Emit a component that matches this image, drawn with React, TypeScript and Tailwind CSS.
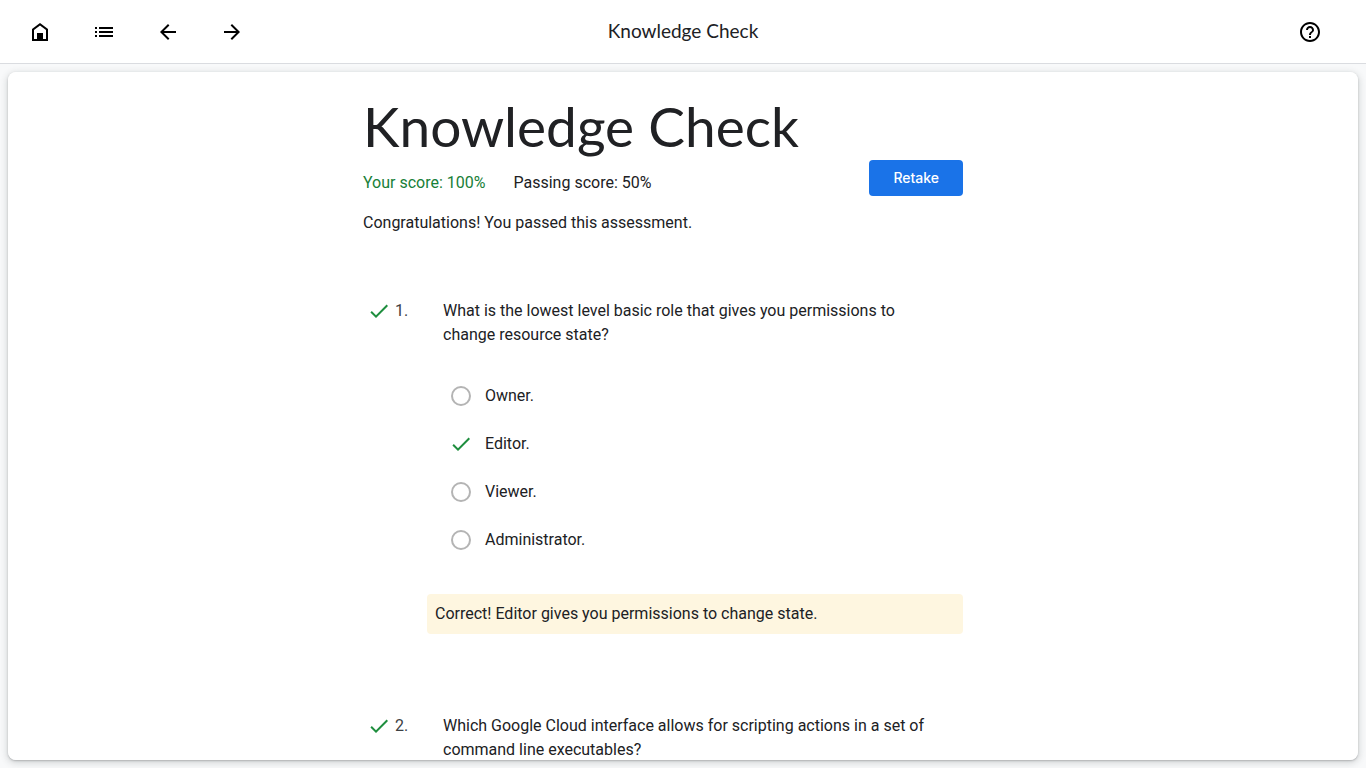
import type { ReactNode } from 'react';

const icons = {
  home: 'M4 21V9l8-6 8 6v12H4Zm2-2h3v-6h6v6h3v-9l-6-4.5L6 10v9Z',
  list: 'M3 13h2v-2H3v2Zm0 4h2v-2H3v2Zm0-8h2V7H3v2Zm4 4h14v-2H7v2Zm0 4h14v-2H7v2ZM7 7v2h14V7H7Z',
  back: 'M20 11H7.83l5.59-5.59L12 4l-8 8 8 8 1.41-1.41L7.83 13H20v-2Z',
  forward: 'M12 4l-1.41 1.41L16.17 11H4v2h12.17l-5.58 5.59L12 20l8-8-8-8Z',
  help: 'M11 18h2v-2h-2v2Zm1-16C6.48 2 2 6.48 2 12s4.48 10 10 10 10-4.48 10-10S17.52 2 12 2Zm0 18c-4.41 0-8-3.59-8-8s3.59-8 8-8 8 3.59 8 8-3.59 8-8 8Zm0-14c-2.21 0-4 1.79-4 4h2c0-1.1.9-2 2-2s2 .9 2 2c0 2-3 1.75-3 5h2c0-2.25 3-2.5 3-5 0-2.21-1.79-4-4-4Z',
  check: 'M9 16.17 4.83 12l-1.42 1.41L9 19 21 7l-1.41-1.41L9 16.17Z',
};

function Icon({ name, className = '' }: { name: keyof typeof icons; className?: string }) {
  return (
    <svg viewBox="0 0 24 24" fill="currentColor" aria-hidden="true" className={`size-6 shrink-0 ${className}`}>
      <path fillRule="evenodd" d={icons[name]} />
    </svg>
  );
}

function IconButton({ name, label }: { name: keyof typeof icons; label: string }) {
  return (
    <button type="button" aria-label={label} className="grid size-12 place-items-center rounded-full text-black">
      <Icon name={name} />
    </button>
  );
}

function Question({ number, text, children }: { number: number; text: string; children?: ReactNode }) {
  return (
    <section>
      <div className="flex">
        <div className="flex w-20 shrink-0 gap-1 pl-1">
          <Icon name="check" className="text-[#1e8e3e]" />
          <span className="text-[#3c4043]">{number}.</span>
        </div>
        <h2 className="max-w-[500px]">{text}</h2>
      </div>
      {children}
    </section>
  );
}

const options = ['Owner.', 'Editor.', 'Viewer.', 'Administrator.'];

export default function App() {
  return (
    <div className="flex h-screen flex-col bg-[#f8f9fa] font-['Roboto',sans-serif] text-base text-[#202124]">
      <header className="grid h-16 shrink-0 grid-cols-[1fr_auto_1fr] items-center border-b border-[#dadce0] bg-white pr-8 pl-4">
        <nav aria-label="Course" className="flex gap-4">
          <IconButton name="home" label="Home" />
          <IconButton name="list" label="Contents" />
          <IconButton name="back" label="Previous" />
          <IconButton name="forward" label="Next" />
        </nav>
        <p className="pl-4 font-['Lato',sans-serif] text-[19px]">Knowledge Check</p>
        <div className="flex justify-end">
          <IconButton name="help" label="Help" />
        </div>
      </header>

      <div className="min-h-0 flex-1 p-2">
        <main className="h-full overflow-y-auto rounded-lg bg-white shadow-[0_1px_2px_rgba(60,64,67,0.3),0_2px_6px_2px_rgba(60,64,67,0.15)] [scrollbar-width:none]">
          <div className="mx-auto w-full max-w-[640px] pt-6 pr-10 pb-16">
            <h1 className="mb-1 font-['Lato',sans-serif] text-[55px] leading-15">Knowledge Check</h1>
            <div className="flex items-start justify-between">
              <div className="flex gap-7 pt-[11px]">
                <p className="text-[#188038]">Your score: 100%</p>
                <p>Passing score: 50%</p>
              </div>
              <button type="button" className="h-9 rounded bg-[#1a73e8] px-6 font-['Inter',sans-serif] text-sm font-medium text-white">
                Retake
              </button>
            </div>
            <p className="mt-[15px]">Congratulations! You passed this assessment.</p>

            <div className="mt-16 flex flex-col gap-20">
              <Question number={1} text="What is the lowest level basic role that gives you permissions to change resource state?">
                <fieldset aria-label="Answers" className="mt-[25px] ml-[86px]">
                  {options.map((option) => (
                    <label key={option} className="flex h-12 items-center gap-3">
                      <span className="grid size-6 place-items-center">
                        <input
                          type="radio"
                          name="role"
                          value={option}
                          defaultChecked={option === 'Editor.'}
                          disabled
                          className="col-start-1 row-start-1 size-5 appearance-none rounded-full border-2 border-[#b4b4b4] checked:border-transparent"
                        />
                        {option === 'Editor.' && (
                          <Icon name="check" className="col-start-1 row-start-1 text-[#1e8e3e]" />
                        )}
                      </span>
                      {option}
                    </label>
                  ))}
                </fieldset>
                <p className="mt-[30px] ml-16 rounded-sm bg-[#fef6e0] p-2">Correct! Editor gives you permissions to change state.</p>
              </Question>
              <Question
                number={2}
                text="Which Google Cloud interface allows for scripting actions in a set of command line executables?"
              />
            </div>
          </div>
        </main>
      </div>
    </div>
  );
}
